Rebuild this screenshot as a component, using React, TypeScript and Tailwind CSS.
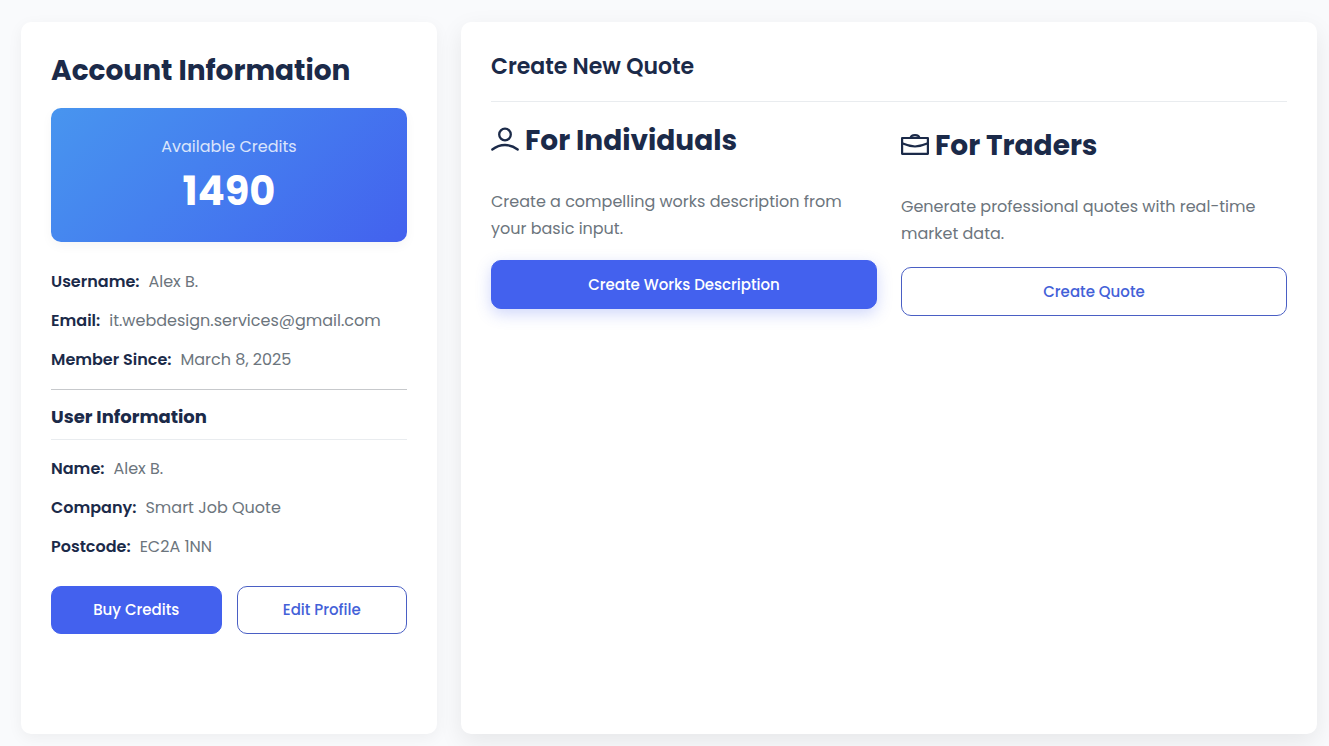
import type { ReactNode } from "react";

interface InfoRowProps { label: string; value: string; }

const account: InfoRowProps[] = [
  { label: "Username:", value: "Alex B." },
  { label: "Email:", value: "it.webdesign.services@gmail.com" },
  { label: "Member Since:", value: "March 8, 2025" },
];

const user: InfoRowProps[] = [
  { label: "Name:", value: "Alex B." },
  { label: "Company:", value: "Smart Job Quote" },
  { label: "Postcode:", value: "EC2A 1NN" },
];

const button = "rounded-[10px] border text-[15px] leading-[22px] font-medium";
const outlineButton = "border-[#4a5fc4] bg-white text-[#4361d8] hover:bg-[#4361ee] hover:text-white";
const solidButton = "border-[#4361ee] bg-[#4361ee] text-white hover:bg-[#3a56d4]";

function InfoList({ rows }: { rows: InfoRowProps[] }) {
  return (
    <dl className="flex flex-col gap-3">
      {rows.map(row => (
        <div key={row.label} className="flex gap-[9px]">
          <dt className="font-semibold">{row.label}</dt>
          <dd className="text-[#6c757d]">{row.value}</dd>
        </div>
      ))}
    </dl>
  );
}

function PersonIcon() {
  return (
    <svg viewBox="0 0 28 28" className="size-7 shrink-0" fill="none" stroke="currentColor" strokeWidth="2.3" strokeLinecap="round">
      <circle cx="14" cy="7.500" r="5.800" />
      <path d="M1.300 22.500c7.700-6 17.700-6 25.400 0" />
    </svg>
  );
}

function BriefcaseIcon() {
  return (
    <svg viewBox="0 0 28 28" className="size-7 shrink-0" fill="none" stroke="currentColor" strokeWidth="2.2" strokeLinejoin="round">
      <rect x="1.100" y="6" width="25.800" height="15.800" />
      <path d="M1.100 11.200c4 1.700 8.500 3 12.900 3.300c4.400-.3 8.900-1.600 12.900-3.300" />
      <path d="M9.600 6c.4-3.800 8.400-3.800 8.800 0" />
    </svg>
  );
}

interface OptionProps { icon: ReactNode; title: string; text: string; children: ReactNode; }

function Option({ icon, title, text, children }: OptionProps) {
  return (
    <section className="flex flex-col">
      <h2 className="flex items-center gap-1.5 text-[28px] leading-[35px] font-bold">
        {icon}
        {title}
      </h2>
      <p className="mt-[30px] text-[#6c757d]">{text}</p>
      {children}
    </section>
  );
}

export default function App() {
  return (
    <div className="flex min-h-screen flex-col bg-[#f9fafc] pt-[22px] pb-3 pl-[9px] font-['Poppins','Inter',sans-serif] text-[16px] leading-[27px] text-[#1b2a49] md:flex-row">
      <div className="flex px-3 md:w-1/3">
        <aside className="w-full rounded-[10px] bg-white p-[30px] shadow-[0_4px_15px_rgba(0,0,0,0.05)]">
          <h2 className="pt-px text-[28px] leading-[35px] font-bold">Account Information</h2>

          <div className="mt-5 mb-[26px] rounded-[10px] bg-linear-135 from-[#4895ef] to-[#4361ee] px-6 pt-[25px] pb-[27px] text-center text-white shadow-[0_4px_12px_rgba(0,0,0,0.04)]">
            <div className="opacity-80">Available Credits</div>
            <div className="mt-[7px] text-[40px] leading-[48px] font-bold">1490</div>
          </div>

          <InfoList rows={account} />
          <hr className="mt-4 mb-[15px] border-[#c7c9cc]" />
          <h3 className="mb-[15px] border-b border-[#e9ecef] pb-[10px] text-[18px] leading-6 font-bold">User Information</h3>
          <InfoList rows={user} />

          <div className="mt-[26px] grid grid-cols-2 gap-[15px]">
            <button type="button" className={`h-12 ${button} ${solidButton}`}>Buy Credits</button>
            <button type="button" className={`h-12 ${button} ${outlineButton}`}>Edit Profile</button>
          </div>
        </aside>
      </div>

      <div className="flex px-3 md:w-2/3">
        <main className="w-full rounded-[10px] bg-white p-[30px] shadow-[0_8px_25px_rgba(0,0,0,0.08)]">
          <h1 className="border-b border-[#e9ecef] pt-px pb-5 text-[22px] leading-[28px] font-semibold">Create New Quote</h1>

          <div className="mt-[21px] grid gap-6 lg:grid-cols-2">
            <Option icon={<PersonIcon />} title="For Individuals" text="Create a compelling works description from your basic input.">
              <button type="button" className={`mt-[18px] h-[49px] shadow-[0_5px_15px_rgba(67,97,238,0.25)] ${button} ${solidButton}`}>
                Create Works Description
              </button>
            </Option>
            <div className="pt-[5px]">
              <Option icon={<BriefcaseIcon />} title="For Traders" text="Generate professional quotes with real-time market data.">
                <button type="button" className={`mt-5 h-[49px] ${button} ${outlineButton}`}>
                  Create Quote
                </button>
              </Option>
            </div>
          </div>
        </main>
      </div>
    </div>
  );
}
